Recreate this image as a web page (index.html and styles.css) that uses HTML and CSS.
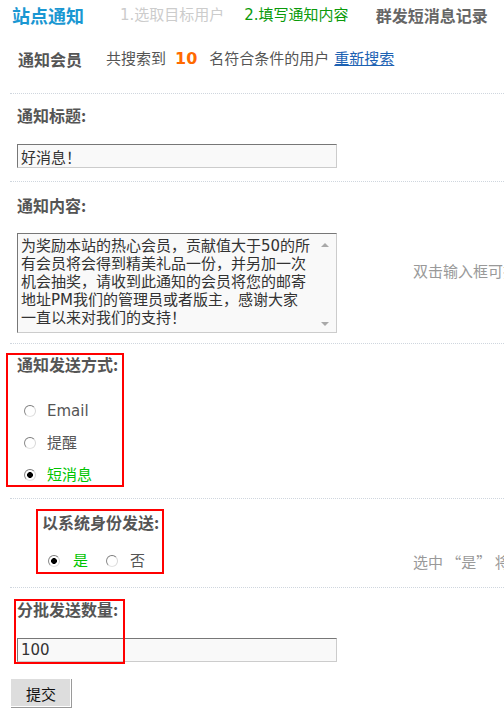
FILE: index.html
```html
<!DOCTYPE html>
<html lang="zh-CN">
<head>
<meta charset="utf-8">
<title>站点通知</title>
<link rel="stylesheet" href="styles.css">
</head>
<body>
<div class="page">
  <div class="header">
    <span class="title">站点通知</span>
    <span class="step step-done">1.选取目标用户</span>
    <span class="step step-current">2.填写通知内容</span>
    <span class="record">群发短消息记录</span>
  </div>

  <div class="members">
    <span class="members-label">通知会员</span>
    <span class="members-text">共搜索到</span>
    <span class="count">10</span>
    <span class="members-text">名符合条件的用户</span>
    <a class="research" href="#">重新搜索</a>
  </div>

  <div class="section section-title">
    <div class="label">通知标题:</div>
    <input class="text-input" type="text" value="好消息！">
  </div>

  <div class="section section-row section-content">
    <div class="main-col">
      <div class="label">通知内容:</div>
      <div class="textarea-wrap">
        <textarea class="textarea">为奖励本站的热心会员，贡献值大于50的所
有会员将会得到精美礼品一份，并另加一次
机会抽奖，请收到此通知的会员将您的邮寄
地址PM我们的管理员或者版主，感谢大家
一直以来对我们的支持！</textarea>
        <span class="arrow arrow-up"></span>
        <span class="arrow arrow-down"></span>
      </div>
    </div>
    <div class="hint hint-content">双击输入框可扩大/缩小</div>
  </div>

  <div class="section section-method">
    <div class="label">通知发送方式:</div>
    <div class="options">
      <label class="option"><input class="radio" type="radio" name="method"><span class="option-text">Email</span></label>
      <label class="option"><input class="radio" type="radio" name="method"><span class="option-text">提醒</span></label>
      <label class="option"><input class="radio" type="radio" name="method" checked><span class="option-text option-on">短消息</span></label>
    </div>
    <span class="annot annot-method"></span>
  </div>

  <div class="section section-row section-system">
    <div class="main-col system-col">
      <div class="label">以系统身份发送:</div>
      <div class="inline-options">
        <label class="option"><input class="radio" type="radio" name="system" checked><span class="option-text option-on">是</span></label>
        <label class="option option-next"><input class="radio" type="radio" name="system"><span class="option-text">否</span></label>
      </div>
    </div>
    <div class="hint hint-system">选中 “是” 将以系统身份发送，否则以您的身份发送</div>
    <span class="annot annot-system"></span>
  </div>

  <div class="section section-batch">
    <div class="label">分批发送数量:</div>
    <input class="text-input" type="text" value="100">
    <span class="annot annot-batch"></span>
  </div>

  <div class="actions">
    <button class="submit" type="button">提交</button>
  </div>
</div>
</body>
</html>
```

FILE: styles.css
```css
html, body {
  margin: 0;
  padding: 0;
  overflow: hidden;
  background: #fff;
}

body {
  width: 504px;
  height: 708px;
  font-family: "DejaVu Sans", "Noto Sans CJK SC", sans-serif;
  font-size: 15px;
  color: #555;
}

.page {
  width: 504px;
}

/* header */
.header {
  display: flex;
  align-items: center;
  height: 34px;
  box-sizing: border-box;
  padding: 4px 0 8px 12px;
  line-height: 22px;
  white-space: nowrap;
}

.title {
  font-family: "Noto Sans CJK SC", sans-serif;
  font-size: 18px;
  font-weight: bold;
  color: #1a97d2;
}

.step {
  font-size: 15px;
}

.step-done {
  margin-left: 36px;
  color: #cccccc;
}

.step-current {
  margin-left: 20px;
  color: #0a9a0a;
}

.record {
  margin-left: 27px;
  font-family: "Noto Sans CJK SC", sans-serif;
  font-size: 16px;
  font-weight: bold;
  color: #666;
}

/* members row */
.members {
  display: flex;
  align-items: center;
  padding: 15px 0 24px 18px;
  line-height: 20px;
  white-space: nowrap;
}

.members-label {
  font-family: "Noto Sans CJK SC", sans-serif;
  font-size: 16px;
  font-weight: bold;
  color: #555;
  margin-right: 24px;
}

.members-text {
  color: #555;
}

.count {
  margin: 0 12px 0 9px;
  font-size: 16px;
  font-weight: bold;
  color: #ff6a00;
}

.research {
  margin-left: 5px;
  color: #1d62b3;
  text-decoration: underline;
}

/* sections */
.section {
  position: relative;
  margin-left: 10px;
  padding-left: 7px;
  border-top: 1px dotted #cfd6de;
}

.section-row {
  display: flex;
  padding-left: 0;
}

.main-col {
  flex: 0 0 403px;
  box-sizing: border-box;
  padding-left: 7px;
}

.label {
  font-family: "Noto Sans CJK SC", sans-serif;
  font-size: 16px;
  font-weight: bold;
  line-height: 18px;
  color: #555;
  white-space: nowrap;
}

.hint {
  flex: 0 0 auto;
  white-space: nowrap;
  line-height: 18px;
  font-family: "Noto Sans CJK SC", sans-serif;
  font-size: 15px;
  color: #999;
}

.text-input {
  display: block;
  width: 320px;
  height: 24px;
  box-sizing: border-box;
  margin: 20px 0 0;
  padding: 0 3px;
  border: 1px solid;
  border-color: #777 #ccc #ccc #777;
  background: #f9f9f9;
  font-family: "DejaVu Sans", "Noto Sans CJK SC", sans-serif;
  font-size: 15px;
  color: #333;
  outline: none;
}

.section-title {
  padding-top: 12px;
  padding-bottom: 13px;
}

.section-content {
  padding-top: 14px;
  padding-bottom: 10px;
}

.textarea-wrap {
  position: relative;
  width: 320px;
  height: 100px;
  margin-top: 19px;
}

.textarea {
  display: block;
  width: 320px;
  height: 100px;
  box-sizing: border-box;
  margin: 0;
  padding: 3px 18px 3px 3px;
  border: 1px solid;
  border-color: #777 #ccc #ccc #777;
  background: #f9f9f9;
  font-family: "DejaVu Sans", "Noto Sans CJK SC", sans-serif;
  font-size: 15px;
  line-height: 18px;
  color: #333;
  resize: none;
  overflow: hidden;
  outline: none;
}

.arrow {
  position: absolute;
  right: 8px;
  width: 0;
  height: 0;
  border-left: 4px solid transparent;
  border-right: 4px solid transparent;
}

.arrow-up {
  top: 10px;
  border-bottom: 4px solid #a9a9a9;
}

.arrow-down {
  bottom: 7px;
  border-top: 4px solid #a9a9a9;
}

.hint-content {
  padding-top: 66px;
}

/* radio groups */
.section-method {
  padding-top: 11px;
  padding-bottom: 7px;
}

.options {
  margin-top: 22px;
}

.option {
  display: flex;
  align-items: center;
  height: 32px;
  padding-left: 7px;
  white-space: nowrap;
}

.radio {
  appearance: none;
  -webkit-appearance: none;
  flex: 0 0 auto;
  width: 12px;
  height: 12px;
  box-sizing: border-box;
  margin: 0;
  border: 1px solid;
  border-color: #7a7a7a #d8d8d8 #e2e2e2 #8a8a8a;
  border-radius: 50%;
  background: #fff;
}

.radio:checked {
  background: radial-gradient(circle, #000 0 2.6px, #fff 3.2px);
}

.option-text {
  margin-left: 11px;
  font-size: 15px;
  line-height: 20px;
  color: #555;
}

.option-on {
  color: #00c400;
}

.section-system {
  padding-top: 14px;
  padding-bottom: 10px;
}

.system-col {
  padding-left: 32px;
}

.inline-options {
  display: flex;
  margin-top: 14px;
}

.inline-options .option {
  padding-left: 6px;
}

.inline-options .option-text {
  margin-left: 13px;
}

.inline-options .option-next {
  padding-left: 18px;
}

.inline-options .option-next .option-text {
  margin-left: 12px;
}

.hint-system {
  padding-top: 40px;
}

.section-batch {
  padding-top: 12px;
}

/* annotation boxes */
.annot {
  position: absolute;
  box-sizing: border-box;
  border: 2px solid #ff0000;
  pointer-events: none;
  z-index: 2;
}

.annot-method {
  left: -4px;
  top: 9px;
  width: 118px;
  height: 134px;
}

.annot-system {
  left: 26px;
  top: 10px;
  width: 128px;
  height: 65px;
}

.annot-batch {
  left: 4px;
  top: 11px;
  width: 111px;
  height: 65px;
}

/* submit */
.actions {
  padding: 17px 0 0 11px;
}

.submit {
  display: block;
  width: 61px;
  height: 29px;
  margin: 0;
  padding: 0;
  border: 0;
  border-right: 1px solid #9a9a9a;
  border-bottom: 1px solid #9a9a9a;
  box-shadow: inset -1px -1px 0 #ffffff;
  background: #dddddd;
  font-family: "Noto Sans CJK SC", sans-serif;
  font-size: 15px;
  color: #111;
}
```
